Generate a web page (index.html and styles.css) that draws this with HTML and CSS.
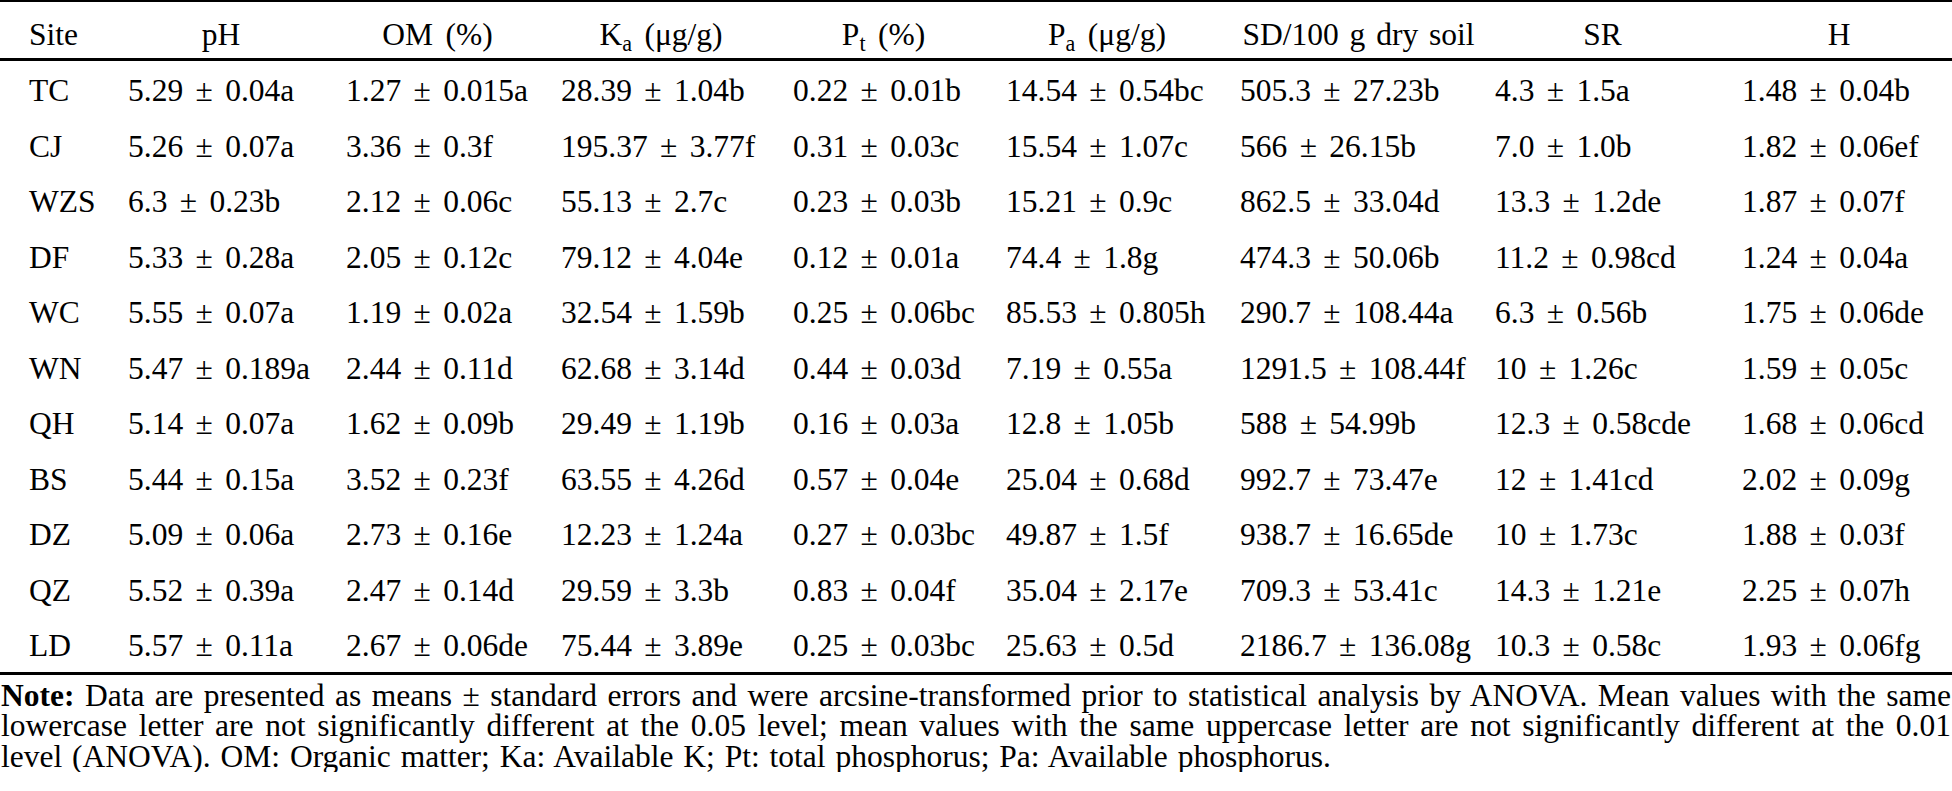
FILE: index.html
```html
<!DOCTYPE html>
<html>
<head>
<meta charset="utf-8">
<link rel="stylesheet" href="styles.css">
</head>
<body>
<table class="data">
<colgroup>
<col class="c-site"><col class="c-ph"><col class="c-om"><col class="c-ka"><col class="c-pt"><col class="c-pa"><col class="c-sd"><col class="c-sr"><col class="c-h">
</colgroup>
<thead>
<tr>
<th class="site">Site</th>
<th>pH</th>
<th>OM (%)</th>
<th>K<sub>a</sub> (μg/g)</th>
<th>P<sub>t</sub> (%)</th>
<th>P<sub>a</sub> (μg/g)</th>
<th class="sd">SD/100 g dry soil</th>
<th>SR</th>
<th>H</th>
</tr>
</thead>
<tbody>
<tr><td class="site">TC</td><td>5.29 ± 0.04a</td><td>1.27 ± 0.015a</td><td>28.39 ± 1.04b</td><td>0.22 ± 0.01b</td><td>14.54 ± 0.54bc</td><td>505.3 ± 27.23b</td><td>4.3 ± 1.5a</td><td>1.48 ± 0.04b</td></tr>
<tr><td class="site">CJ</td><td>5.26 ± 0.07a</td><td>3.36 ± 0.3f</td><td>195.37 ± 3.77f</td><td>0.31 ± 0.03c</td><td>15.54 ± 1.07c</td><td>566 ± 26.15b</td><td>7.0 ± 1.0b</td><td>1.82 ± 0.06ef</td></tr>
<tr><td class="site">WZS</td><td>6.3 ± 0.23b</td><td>2.12 ± 0.06c</td><td>55.13 ± 2.7c</td><td>0.23 ± 0.03b</td><td>15.21 ± 0.9c</td><td>862.5 ± 33.04d</td><td>13.3 ± 1.2de</td><td>1.87 ± 0.07f</td></tr>
<tr><td class="site">DF</td><td>5.33 ± 0.28a</td><td>2.05 ± 0.12c</td><td>79.12 ± 4.04e</td><td>0.12 ± 0.01a</td><td>74.4 ± 1.8g</td><td>474.3 ± 50.06b</td><td>11.2 ± 0.98cd</td><td>1.24 ± 0.04a</td></tr>
<tr><td class="site">WC</td><td>5.55 ± 0.07a</td><td>1.19 ± 0.02a</td><td>32.54 ± 1.59b</td><td>0.25 ± 0.06bc</td><td>85.53 ± 0.805h</td><td>290.7 ± 108.44a</td><td>6.3 ± 0.56b</td><td>1.75 ± 0.06de</td></tr>
<tr><td class="site">WN</td><td>5.47 ± 0.189a</td><td>2.44 ± 0.11d</td><td>62.68 ± 3.14d</td><td>0.44 ± 0.03d</td><td>7.19 ± 0.55a</td><td>1291.5 ± 108.44f</td><td>10 ± 1.26c</td><td>1.59 ± 0.05c</td></tr>
<tr><td class="site">QH</td><td>5.14 ± 0.07a</td><td>1.62 ± 0.09b</td><td>29.49 ± 1.19b</td><td>0.16 ± 0.03a</td><td>12.8 ± 1.05b</td><td>588 ± 54.99b</td><td>12.3 ± 0.58cde</td><td>1.68 ± 0.06cd</td></tr>
<tr><td class="site">BS</td><td>5.44 ± 0.15a</td><td>3.52 ± 0.23f</td><td>63.55 ± 4.26d</td><td>0.57 ± 0.04e</td><td>25.04 ± 0.68d</td><td>992.7 ± 73.47e</td><td>12 ± 1.41cd</td><td>2.02 ± 0.09g</td></tr>
<tr><td class="site">DZ</td><td>5.09 ± 0.06a</td><td>2.73 ± 0.16e</td><td>12.23 ± 1.24a</td><td>0.27 ± 0.03bc</td><td>49.87 ± 1.5f</td><td>938.7 ± 16.65de</td><td>10 ± 1.73c</td><td>1.88 ± 0.03f</td></tr>
<tr><td class="site">QZ</td><td>5.52 ± 0.39a</td><td>2.47 ± 0.14d</td><td>29.59 ± 3.3b</td><td>0.83 ± 0.04f</td><td>35.04 ± 2.17e</td><td>709.3 ± 53.41c</td><td>14.3 ± 1.21e</td><td>2.25 ± 0.07h</td></tr>
<tr><td class="site">LD</td><td>5.57 ± 0.11a</td><td>2.67 ± 0.06de</td><td>75.44 ± 3.89e</td><td>0.25 ± 0.03bc</td><td>25.63 ± 0.5d</td><td>2186.7 ± 136.08g</td><td>10.3 ± 0.58c</td><td>1.93 ± 0.06fg</td></tr>
</tbody>
</table>
<p class="note"><b>Note:</b> Data are presented as means ± standard errors and were arcsine-transformed prior to statistical analysis by ANOVA. Mean values with the same lowercase letter are not significantly different at the 0.05 level; mean values with the same uppercase letter are not significantly different at the 0.01 level (ANOVA). OM: Organic matter; Ka: Available K; Pt: total phosphorus; Pa: Available phosphorus.</p>
</body>
</html>
```
FILE: styles.css
```css
html, body {
  margin: 0;
  padding: 0;
  background: #fff;
}
body {
  font-family: "Liberation Serif", "Times New Roman", serif;
  font-size: 31.5px;
  color: #000;
  width: 1952px;
}
.data {
  width: 1952px;
  border-collapse: collapse;
  table-layout: fixed;
  font-size: 31.5px;
  word-spacing: 4.5px;
}
.c-site { width: 112px; }
.c-ph { width: 218px; }
.c-om { width: 215px; }
.c-ka { width: 232px; }
.c-pt { width: 213px; }
.c-pa { width: 234px; }
.c-sd { width: 255px; }
.c-sr { width: 247px; }
.c-h { width: 226px; }
.data th {
  font-weight: normal;
  text-align: center;
  line-height: 30px;
  padding: 17.5px 0 8.5px 0;
  border-top: 2px solid #000;
  border-bottom: 3px solid #000;
  white-space: nowrap;
  vertical-align: top;
}
.data th.sd {
  word-spacing: 3px;
  padding-left: 14px;
}
.data td {
  text-align: left;
  line-height: 30px;
  padding: 15px 0 10.5px 16px;
  white-space: nowrap;
  vertical-align: top;
}
.data th.site,
.data td.site {
  text-align: left;
  padding-left: 29px;
}
.data tbody tr:last-child td {
  border-bottom: 3px solid #000;
}
sub {
  font-size: 0.7em;
  line-height: 0;
  vertical-align: -0.25em;
}
.note {
  margin: 6px 0 0 0;
  padding: 0 1px;
  line-height: 30.5px;
  word-spacing: 2px;
  text-align: justify;
}
```
